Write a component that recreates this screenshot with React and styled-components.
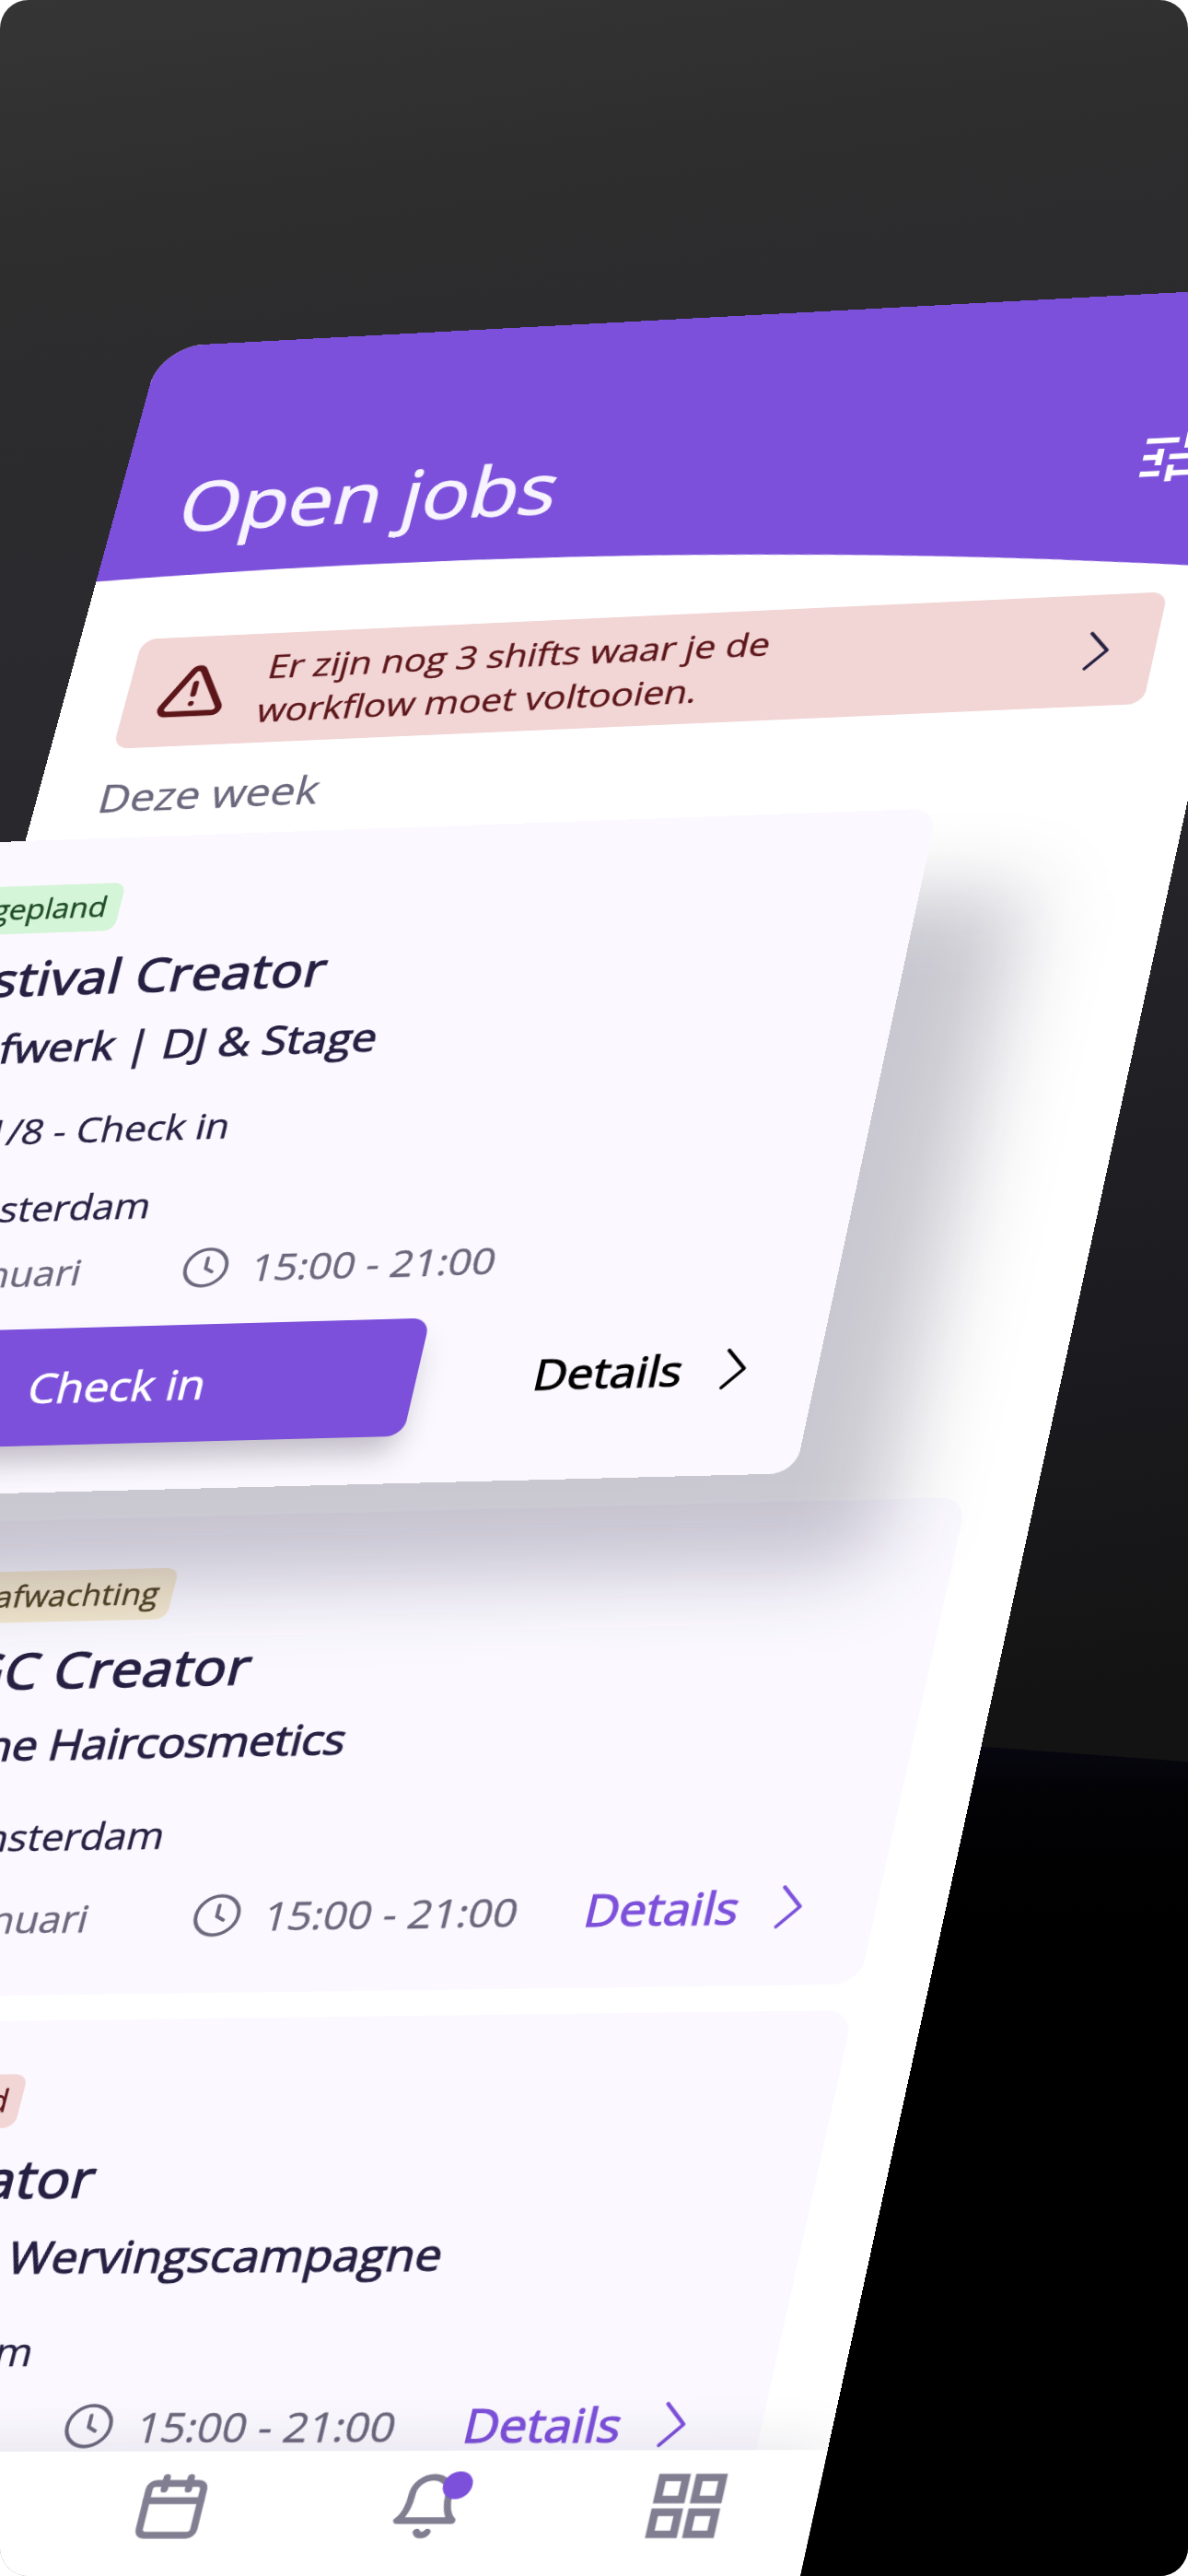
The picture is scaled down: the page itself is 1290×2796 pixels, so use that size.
import React from 'react';
import styled, { createGlobalStyle } from 'styled-components';

const colors = {
  purple: '#7c50da',
  ink: '#262042',
  muted: '#6b677c',
  card: '#fbf9ff',
  icon: '#827e92',
  danger: '#5c1519',
};

// matrix3d that maps a w x h box on the four screen corners tl, tr, br, bl
function quadMatrix(w, h, [[x0, y0], [x1, y1], [x2, y2], [x3, y3]]) {
  const dx1 = x1 - x2;
  const dx2 = x3 - x2;
  const dy1 = y1 - y2;
  const dy2 = y3 - y2;
  const sx = x0 - x1 + x2 - x3;
  const sy = y0 - y1 + y2 - y3;
  const den = dx1 * dy2 - dx2 * dy1;
  const g = (sx * dy2 - dx2 * sy) / den;
  const k = (dx1 * sy - sx * dy1) / den;
  return `matrix3d(${[
    (x1 - x0 + g * x1) / w, (y1 - y0 + g * y1) / w, 0, g / w,
    (x3 - x0 + k * x3) / h, (y3 - y0 + k * y3) / h, 0, k / h,
    0, 0, 1, 0,
    x0, y0, 0, 1,
  ].map((n) => n.toFixed(10)).join(',')})`;
}

const phonePlane = quadMatrix(1200, 2400, [[174.1, 376.4], [1411.7, 310.3], [899, 2658], [-450, 2661]]);
const liftedPlane = quadMatrix(1066, 760, [[-93.5, 917.3], [1018, 877.4], [863.5, 1599.2], [-279.9, 1628.1]]);

const checkInJob = {
  status: 'Ingepland',
  tone: 'planned',
  title: 'Festival Creator',
  client: 'Strafwerk | DJ & Stage',
  clientTrack: 0.1,
  step: 'Stap 1/8 - Check in',
  city: 'Amsterdam',
  date: '1 januari',
  time: '15:00 - 21:00',
};

const jobs = [
  {
    status: 'In afwachting',
    statusTrack: 0.4,
    tone: 'pending',
    title: 'UGC Creator',
    client: 'Keune Haircosmetics',
    clientTrack: -0.4,
    city: 'Amsterdam',
    date: '1 januari',
    time: '15:00 - 21:00',
  },
  {
    status: 'Geannuleerd',
    statusTrack: -1,
    tone: 'cancelled',
    title: 'Bar Creator',
    client: 'Gemeente Wervingscampagne',
    clientTrack: 0.2,
    city: 'Amsterdam',
    date: '1 januari',
    time: '15:00 - 21:00',
    tight: true,
  },
];

const tones = {
  planned: ['#d5f5d8', '#1d4a26'],
  pending: ['#f4e8cf', '#4f4122'],
  cancelled: ['#f2d5d5', '#5c1519'],
};

function Chevron({ color }) {
  return (
    <svg width="26" height="50" viewBox="0 0 26 50" fill="none" stroke={color} strokeWidth="3.600" strokeLinecap="round" strokeLinejoin="round">
      <path d="M3 4L22 25L3 46" />
    </svg>
  );
}

function Clock() {
  return (
    <svg width="48" height="48" viewBox="0 0 48 48" fill="none" stroke={colors.muted} strokeWidth="3.600" strokeLinecap="round" strokeLinejoin="round">
      <circle cx="24" cy="24" r="21" />
      <path d="M24 13V25L31 29" />
    </svg>
  );
}

function Pin() {
  return (
    <svg width="45" height="45" viewBox="0 0 24 24" fill="none" stroke={colors.muted} strokeWidth="2">
      <path d="M20 10c0 5-5.500 10.200-8 12c-2.500-1.800-8-7-8-12a8 8 0 0 1 16 0" />
      <circle cx="12" cy="10" r="3" />
    </svg>
  );
}

function Calendar({ size = 45, color = colors.muted, weight = 2 }) {
  return (
    <svg width={size} height={size} viewBox="0 0 24 24" fill="none" stroke={color} strokeWidth={weight} strokeLinecap="round" strokeLinejoin="round">
      <path d="M8 2v4M16 2v4M3 10h18" />
      <rect x="3" y="4" width="18" height="18" rx="2" />
    </svg>
  );
}

function JobCard({ job, lifted }) {
  const [bg, fg] = tones[job.tone];
  return (
    <Card $lifted={lifted}>
      <Badge $bg={bg} $fg={fg} $track={job.statusTrack}>{job.status}</Badge>
      <JobTitle>{job.title}</JobTitle>
      <Client $track={job.clientTrack}>{job.client}</Client>
      {job.step && <Step>{job.step}</Step>}
      <Place $lifted={lifted} $tight={job.tight}>
        <Pin />
        <span>{job.city}</span>
      </Place>
      <When $lifted={lifted} $tight={job.tight}>
        <DateCell>
          <Calendar />
          <span>{job.date}</span>
        </DateCell>
        <TimeCell>
          <Clock />
          <span>{job.time}</span>
        </TimeCell>
        {!lifted && (
          <Details $color={colors.purple}>
            <span>Details</span>
            <Chevron color={colors.purple} />
          </Details>
        )}
      </When>
      {lifted && (
        <Actions>
          <CheckIn>Check in</CheckIn>
          <Details $color="#000">
            <span>Details</span>
            <Chevron color="#000" />
          </Details>
        </Actions>
      )}
    </Card>
  );
}

export default function App() {
  return (
    <Stage>
      <GlobalStyle />
      <Floor />
      <Plane $matrix={phonePlane}>
        <Phone>
          <Header>
            <h1>Open jobs</h1>
            <svg width="80" height="80" viewBox="0 0 24 24" fill="#fff">
              <path d="M3 17v2h6v-2H3zM3 5v2h10V5H3zm10 16v-2h8v-2h-8v-2h-2v6h2zM7 9v2H3v2h4v2h2V9H7zm14 4v-2H11v2h10zm-6-4h2V7h4V5h-4V3h-2v6z" />
            </svg>
          </Header>
          <Notice>
            <svg width="73" height="73" viewBox="0 0 24 24" fill="none" stroke={colors.danger} strokeWidth="2.300" strokeLinecap="round" strokeLinejoin="round">
              <path d="M21.730 18l-8-14a2 2 0 0 0-3.480 0l-8 14A2 2 0 0 0 4 21h16a2 2 0 0 0 1.730-3" />
              <path d="M12 9v4.300M12 17h.01" strokeWidth="2" />
            </svg>
            <p>
              Er zijn nog 3 shifts waar je de
              <br />
              workflow moet voltooien.
            </p>
            <Chevron color={colors.ink} />
          </Notice>
          <WeekLabel>Deze week</WeekLabel>
          <Jobs>
            <LiftedSlot />
            {jobs.map((job) => <JobCard key={job.client} job={job} />)}
          </Jobs>
          <NavBar>
            <NavItem />
            <NavItem />
            <NavItem><Calendar size={70} color={colors.icon} weight={2.4} /></NavItem>
            <NavItem>
              <svg width="70" height="70" viewBox="0 0 24 24" fill="none" stroke={colors.icon} strokeWidth="2.300" strokeLinecap="round" strokeLinejoin="round">
                <path d="M18 8A6 6 0 0 0 6 8c0 7-3 9-3 9h18s-3-2-3-9" />
                <path d="M13.730 21a2 2 0 0 1-3.460 0" />
              </svg>
              <Dot />
            </NavItem>
            <NavItem>
              <svg width="76" height="76" viewBox="0 0 24 24" fill="none" stroke={colors.icon} strokeWidth="2.400">
                <path d="M3 3h7v7H3zM14 3h7v7h-7zM3 14h7v7H3zM14 14h7v7h-7z" />
              </svg>
            </NavItem>
          </NavBar>
        </Phone>
      </Plane>
      <Plane $matrix={liftedPlane}>
        <JobCard lifted job={checkInJob} />
      </Plane>
    </Stage>
  );
}

const GlobalStyle = createGlobalStyle`
  * { box-sizing: border-box; }
  body { margin: 0; background: #fff; }
  h1, h2, h3, p { margin: 0; font-weight: 400; }
  svg { display: block; flex: none; }
`;

const Stage = styled.main`
  position: relative;
  width: 1290px;
  height: 2796px;
  overflow: hidden;
  border-radius: 31px;
  font-family: "Open Sans", "Noto Sans", sans-serif;
  color: ${colors.ink};
  background: linear-gradient(172deg, #353535 0%, #2d2d2e 10%, #29282d 30%, #1d1c21 52%, #131313 68%);
  -webkit-text-stroke-width: 0.4px;`;

const Floor = styled.div`
  position: absolute;
  inset: 1882px 0 0 700px;
  background: linear-gradient(180deg, #090814 0, #030306 60px, #000 200px);
  clip-path: polygon(0 0, 62% 1.500%, 100% 3.300%, 100% 100%, 0 100%);`;

const Plane = styled.div`
  position: absolute;
  top: 0;
  left: 0;
  transform-origin: 0 0;
  transform: ${({ $matrix }) => $matrix};`;

const Phone = styled.div`
  display: flex;
  flex-direction: column;
  width: 1200px;
  height: 2597px;
  overflow: hidden;
  background: #fff;
  border-radius: 48px;`;

const Header = styled.header`
  display: flex;
  flex: none;
  justify-content: space-between;
  height: 343px;
  padding: 162px 53px 0 70px;
  background: ${colors.purple};
  clip-path: path('M0 0H1200V341Q600 269 0 292Z');
  color: #f7f3ff;

  h1 {
    margin-top: -20px;
    font-size: 84px;
    line-height: 120px;
    -webkit-text-stroke-width: 1.4px;
  }`;

const Notice = styled.section`
  display: flex;
  flex: none;
  align-items: center;
  height: 133px;
  margin: 23px 67px 0;
  padding: 0 45px 0 34px;
  background: #f2d5d5;
  border-radius: 16px;
  color: ${colors.danger};

  p {
    flex: 1;
    margin-left: 37px;
    font-size: 38.800px;
    line-height: 53px;
  }`;

const WeekLabel = styled.h2`
  flex: none;
  margin: 27px 0 0 67px;
  font-size: 46.300px;
  line-height: 66px;
  color: ${colors.muted};`;

const Jobs = styled.div`
  display: flex;
  flex: none;
  flex-direction: column;
  gap: 27px;
  height: 1791px;
  margin-top: 18px;
  padding: 0 67px;`;

// The first job floats above the phone; its place in the list keeps only the shadow
const LiftedSlot = styled.div`
  position: relative;
  z-index: 1;
  flex: none;
  height: 764px;

  &::after {
    content: '';
    position: absolute;
    inset: 0;
    transform: translate(-76px, 103px);
    background: rgba(25, 21, 55, 0.235);
    border-radius: 26px;
    filter: blur(44px);
  }`;

const Card = styled.article`
  display: flex;
  flex: none;
  flex-direction: column;
  align-items: flex-start;
  width: 1066px;
  height: ${({ $lifted }) => ($lifted ? 760 : 522)}px;
  padding: ${({ $lifted }) => ($lifted ? '54px 64px 0 61px' : '57px 64px 0')};
  background: ${colors.card};
  border-radius: 26px;`;

const Badge = styled.span`
  height: 57px;
  padding: 0 13px;
  background: ${({ $bg }) => $bg};
  border-radius: 12px;
  color: ${({ $fg }) => $fg};
  font-size: 32px;
  line-height: 55px;
  letter-spacing: ${({ $track = 0 }) => $track}px;`;

const JobTitle = styled.h2`
  margin-top: 17px;
  font-size: 55px;
  line-height: 72px;
  letter-spacing: 0.6px;
  -webkit-text-stroke-width: 1.6px;`;

const Client = styled.h3`
  margin-top: 13px;
  font-size: 46px;
  line-height: 66px;
  letter-spacing: ${({ $track = 0 }) => $track}px;
  -webkit-text-stroke-width: 1.1px;`;

const Step = styled.p`
  margin-top: 36px;
  font-size: 40.300px;
  line-height: 60px;`;

const Place = styled.div`
  display: flex;
  align-items: center;
  gap: 22px;
  height: 60px;
  margin-top: ${({ $lifted, $tight }) => (($lifted && 29) || ($tight ? 35 : 38))}px;
  font-size: 40px;`;

const When = styled.div`
  display: flex;
  align-items: center;
  width: 100%;
  height: 60px;
  margin-top: ${({ $lifted, $tight }) => (($lifted && 15) || ($tight ? 18 : 29))}px;
  color: ${colors.muted};`;

const DateCell = styled.div`
  display: flex;
  align-items: center;
  gap: 22px;
  width: 334px;
  font-size: 40px;`;

const TimeCell = styled.div`
  display: flex;
  align-items: center;
  gap: 23px;
  width: 386px;
  font-size: 42px;`;

const Details = styled.a`
  display: flex;
  flex: 1;
  align-items: center;
  justify-content: space-between;
  margin-right: 6px;
  color: ${({ $color }) => $color};
  font-size: 47px;
  white-space: nowrap;
  -webkit-text-stroke-width: 1.2px;`;

const Actions = styled.div`
  display: flex;
  align-items: center;
  gap: 119px;
  width: 100%;
  margin-top: 35px;`;

const CheckIn = styled.button`
  width: 601px;
  height: 133px;
  padding: 0 8px 0 0;
  border: 0;
  border-radius: 18px;
  background: ${colors.purple};
  box-shadow: 0 24px 32px -6px rgba(30, 20, 40, 0.26);
  color: #fff;
  font: 400 46px "Open Sans", "Noto Sans", sans-serif;
  -webkit-text-stroke: 0.8px #fff;`;

const NavBar = styled.nav`
  position: relative;
  z-index: 2;
  display: flex;
  flex: none;
  width: 1225px;
  height: 196px;
  margin-left: -24px;
  padding-top: 18px;
  background: #fff;
  box-shadow: 0 -6px 50px rgba(25, 21, 55, 0.1);`;

const NavItem = styled.div`
  position: relative;
  display: flex;
  align-items: center;
  justify-content: center;
  width: 245px;
  height: 76px;`;

const Dot = styled.i`
  position: absolute;
  top: 3px;
  left: 133px;
  width: 28px;
  height: 28px;
  border-radius: 50%;
  background: ${colors.purple};`;
